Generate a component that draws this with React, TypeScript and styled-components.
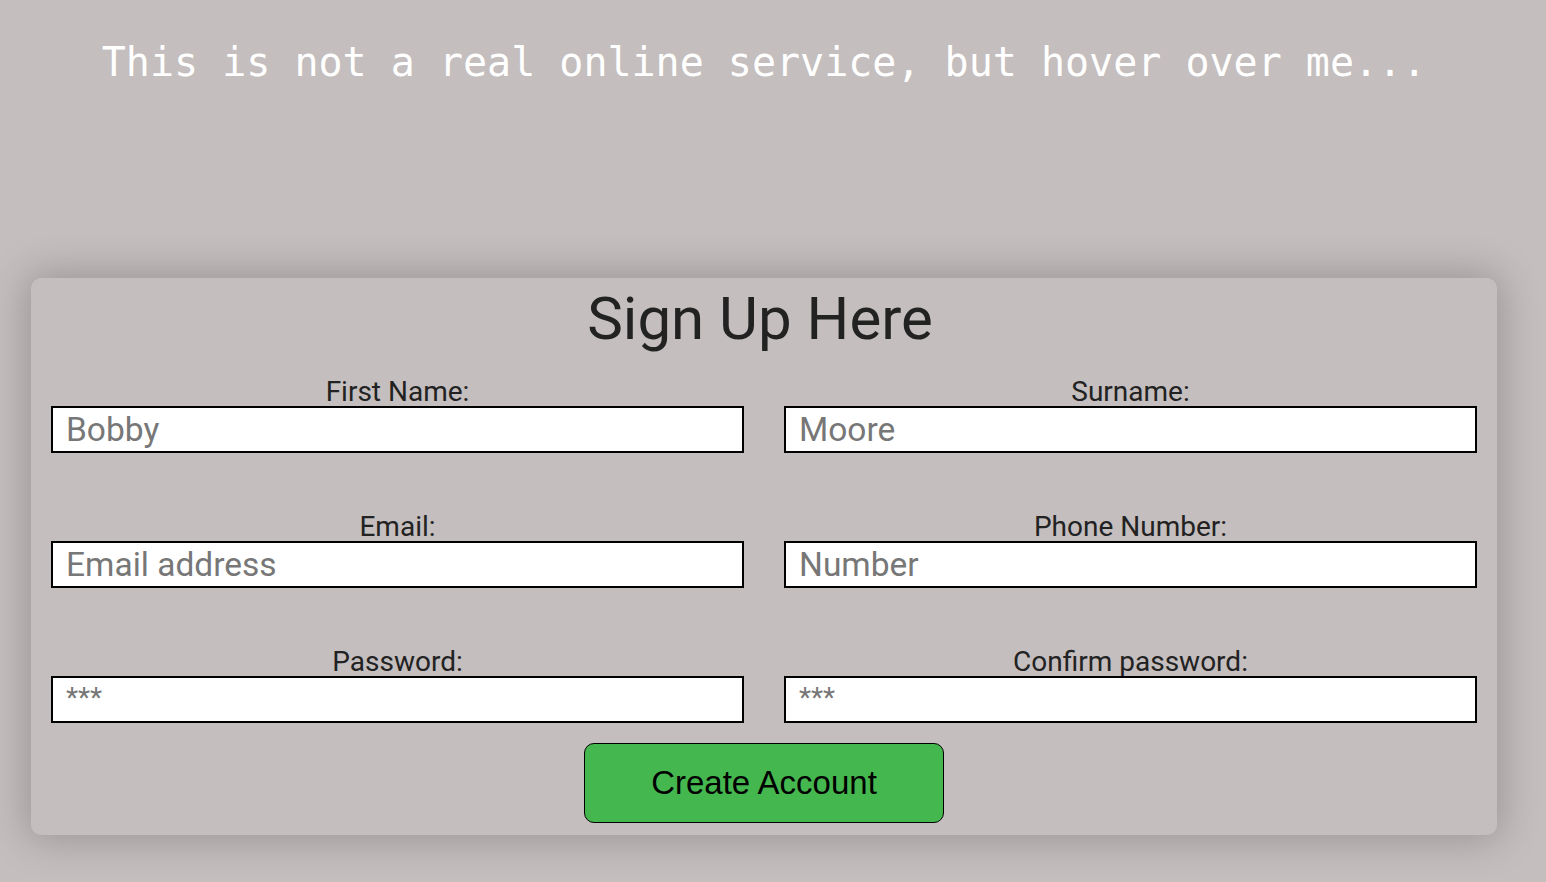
import React from 'react';
import styled, { createGlobalStyle } from 'styled-components';

const GlobalStyle = createGlobalStyle`
  html, body {
    margin: 0;
    padding: 0;
    background: #c4bebe;
  }
  body {
    font-family: Roboto, "Liberation Sans", Arial, sans-serif;
  }
`;

const fields = [
  { label: 'First Name:', placeholder: 'Bobby', type: 'text' },
  { label: 'Surname:', placeholder: 'Moore', type: 'text' },
  { label: 'Email:', placeholder: 'Email address', type: 'email' },
  { label: 'Phone Number:', placeholder: 'Number', type: 'tel' },
  { label: 'Password:', placeholder: '***', type: 'password' },
  { label: 'Confirm password:', placeholder: '***', type: 'password' }
];

const App = () => {
  return (
    <>
      <GlobalStyle />
      <Page>
        <Teaser>This is not a real online service, but hover over me...</Teaser>
        <Card>
          <Title>Sign Up Here</Title>
          <Grid>
            {fields.map((f) => (
              <Field key={f.label}>
                <Label>{f.label}</Label>
                <Input
                  type={f.type}
                  placeholder={f.placeholder}
                  $small={f.type === 'password'}
                />
              </Field>
            ))}
          </Grid>
          <ButtonRow>
            <SubmitButton>Create Account</SubmitButton>
          </ButtonRow>
        </Card>
      </Page>
    </>
  );
};

export default App;

const Page = styled.div`
  width: 1466px;
  margin-left: 31px;
  padding: 39px 0 47px;
`;

const Teaser = styled.h1`
  margin: 0;
  text-align: center;
  font-family: "DejaVu Sans Mono", "Liberation Mono", monospace;
  font-weight: normal;
  font-size: 40px;
  line-height: 47px;
  color: #fff;
`;

const Card = styled.form`
  margin-top: 192px;
  background: #c4bebe;
  border-radius: 10px;
  box-shadow: 0 0 40px 4px rgba(0, 0, 0, 0.22);
  padding: 6px 20px 12px;
`;

const Title = styled.h2`
  margin: 0;
  padding-right: 8px;
  text-align: center;
  font-family: Roboto, sans-serif;
  font-weight: normal;
  font-size: 60px;
  line-height: 70px;
  color: #222;
`;

const Grid = styled.div`
  display: grid;
  grid-template-columns: 1fr 1fr;
  column-gap: 40px;
  row-gap: 58px;
  margin-top: 22px;
`;

const Field = styled.div`
  display: flex;
  flex-direction: column;
`;

const Label = styled.label`
  padding-top: 2px;
  text-align: center;
  font-family: Roboto, sans-serif;
  font-size: 28px;
  line-height: 28px;
  color: #222;
`;

const Input = styled.input<{ $small?: boolean }>`
  box-sizing: border-box;
  height: 47px;
  width: 100%;
  border: 2px solid #000;
  background: #fff;
  padding: ${(p) => (p.$small ? '0 13px 5px' : '0 13px')};
  font-family: Roboto, sans-serif;
  font-size: ${(p) => (p.$small ? '28px' : '33.5px')};
  outline: none;
  &::placeholder {
    color: #777;
  }
`;

const ButtonRow = styled.div`
  display: flex;
  justify-content: center;
  margin-top: 20px;
`;

const SubmitButton = styled.button`
  width: 360px;
  height: 80px;
  background: #45b74f;
  border: 1px solid #000;
  border-radius: 10px;
  font-family: "Liberation Sans", Arial, sans-serif;
  font-size: 33px;
  color: #000;
  cursor: pointer;
`;
